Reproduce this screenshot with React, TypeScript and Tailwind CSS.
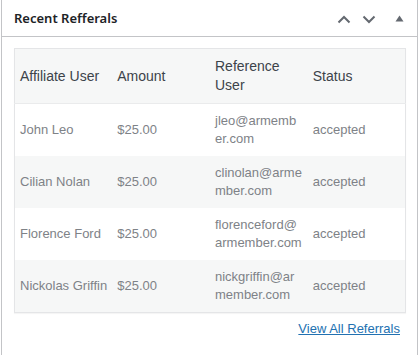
import React from 'react'

interface Referral {
  user: string
  amount: string
  email: string
  status: string
}

const referrals: Referral[] = [
  { user: 'John Leo', amount: '$25.00', email: 'jleo@armember.com', status: 'accepted' },
  { user: 'Cilian Nolan', amount: '$25.00', email: 'clinolan@armember.com', status: 'accepted' },
  { user: 'Florence Ford', amount: '$25.00', email: 'florenceford@armember.com', status: 'accepted' },
  { user: 'Nickolas Griffin', amount: '$25.00', email: 'nickgriffin@armember.com', status: 'accepted' },
]

export default function App() {
  return (
    <div className="w-[419px] h-[355px] overflow-hidden bg-white font-['Liberation_Sans',Arial,sans-serif]">
      <div className="ml-[1px] w-[417px] h-[360px] border-x border-[#c3c4c7] bg-white">
        {/* Header */}
        <div className="h-[37px] flex items-center justify-between border-b border-[#c3c4c7] pl-[12px] pr-[12px]">
          <h2 className="text-[13px] font-semibold text-[#1d2327] font-['Noto_Sans',sans-serif] leading-none mt-[1px]">
            Recent Refferals
          </h2>
          <div className="flex items-center mt-[2px]">
            <svg width="14" height="9" viewBox="0 0 14 9" className="mr-[11px] -ml-[1px]">
              <path d="M1.5 7.5 L7 2 L12.5 7.5" fill="none" stroke="#646970" strokeWidth="2" />
            </svg>
            <svg width="14" height="9" viewBox="0 0 14 9" className="mr-[19px]">
              <path d="M1.5 1.5 L7 7 L12.5 1.5" fill="none" stroke="#646970" strokeWidth="2" />
            </svg>
            <svg width="9" height="7" viewBox="0 0 9 7" className="mr-[1px] mb-[1px]">
              <path d="M4.5 0.5 L8.5 6.5 L0.5 6.5 Z" fill="#646970" />
            </svg>
          </div>
        </div>

        {/* Table */}
        <div className="px-[12px] pt-[11px]">
          <table className="w-[392px] table-fixed border-collapse border border-[#e4e5e7] shadow-[0_1px_1px_rgba(0,0,0,0.04)]">
            <thead>
              <tr className="bg-[#f6f7f7] border-b border-[#eaebec]">
                <th className="text-left font-normal text-[14px] leading-[19px] text-[#3c434a] px-[5px] py-[8px] h-[54px]">Affiliate User</th>
                <th className="text-left font-normal text-[14px] leading-[19px] text-[#3c434a] px-[5px] py-[8px]">Amount</th>
                <th className="text-left font-normal text-[14px] leading-[19px] text-[#3c434a] px-[5px] py-[8px]">Reference User</th>
                <th className="text-left font-normal text-[14px] leading-[19px] text-[#3c434a] px-[5px] py-[8px]">Status</th>
              </tr>
            </thead>
            <tbody>
              {referrals.map((r, i) => (
                <tr key={r.email} className={i % 2 === 1 ? 'bg-[#f6f7f7]' : 'bg-white'}>
                  <td className="text-[13px] leading-[18px] text-[#7e8287] px-[5px] py-[8px] h-[52px] whitespace-nowrap">{r.user}</td>
                  <td className="text-[13px] leading-[18px] text-[#7e8287] px-[5px] py-[8px]">{r.amount}</td>
                  <td className="text-[13px] leading-[18px] text-[#7e8287] px-[5px] py-[8px] break-all">{r.email}</td>
                  <td className="text-[13px] leading-[18px] text-[#7e8287] px-[5px] py-[8px]">{r.status}</td>
                </tr>
              ))}
            </tbody>
          </table>

          <div className="flex justify-end pr-[5px] pt-[7px]">
            <a href="#" className="text-[13px] leading-[18px] text-[#2271b1] underline">
              View All Referrals
            </a>
          </div>
        </div>
      </div>
    </div>
  )
}
